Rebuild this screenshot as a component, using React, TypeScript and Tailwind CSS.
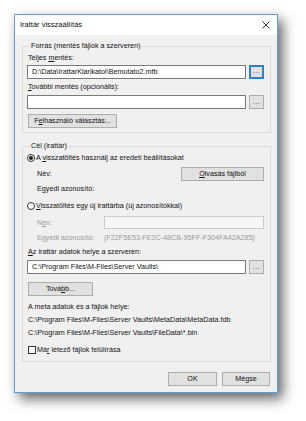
import React from "react";

const F = "font-['Liberation_Sans',Arial,sans-serif]";

function U({ children }: { children: React.ReactNode }) {
  return <span className="underline underline-offset-[1px]">{children}</span>;
}

function Btn({
  children,
  className = "",
}: {
  children: React.ReactNode;
  className?: string;
}) {
  return (
    <div
      className={`flex items-center justify-center h-[14px] bg-[#e1e1e1] border border-[#adadad] text-[7.2px] leading-none text-[#111] ${className}`}
    >
      {children}
    </div>
  );
}

function Dots({ focused = false }: { focused?: boolean }) {
  return (
    <div
      className={`flex items-end justify-center pb-[3px] w-[15px] h-[14px] bg-[#e1e1e1] ${
        focused ? "border-2 border-[#2a80d2]" : "border border-[#adadad]"
      } text-[7px] leading-none text-[#333]`}
    >
      <span className="tracking-[0.5px]">...</span>
    </div>
  );
}

function Input({ value = "" }: { value?: string }) {
  return (
    <div className="flex-1 h-[14px] bg-white border border-[#7a7a7a] flex items-center pl-[4px] text-[7.2px] leading-none text-[#111] whitespace-nowrap overflow-hidden">
      {value}
    </div>
  );
}

function Radio({ checked }: { checked?: boolean }) {
  return (
    <div className="w-[8px] h-[8px] rounded-full border border-[#333] bg-white flex items-center justify-center shrink-0">
      {checked && <div className="w-[4px] h-[4px] rounded-full bg-[#222]" />}
    </div>
  );
}

export default function App() {
  return (
    <div className={`w-[306px] h-[421px] bg-white pt-[14px] pl-[14px] ${F}`}>
      <div className="w-[264px] h-[379px] border border-[#5d9fdc] bg-[#f0f0f0] flex flex-col shadow-[5px_6px_12px_rgba(0,0,0,0.6)]">
        {/* Title bar */}
        <div className="h-[20px] bg-white flex items-center justify-between pl-[5px] pr-[6px] shrink-0">
          <span className="text-[7.5px] text-[#111] leading-none">
            Irattár visszaállítás
          </span>
          <svg width="8" height="8" viewBox="0 0 8 8" className="mr-[1px]">
            <path d="M0.5 0.5 L7.5 7.5 M7.5 0.5 L0.5 7.5" stroke="#333" strokeWidth="1" />
          </svg>
        </div>

        {/* Body */}
        <div className="flex-1 flex flex-col pl-[7px] pr-[6px] pt-[6px] text-[7.2px] text-[#111] leading-[10px]">
          {/* Group 1 */}
          <fieldset className="border border-[#dcdcdc] pl-[4px] pr-[6px] pb-[4px]">
            <legend className="ml-[3px] px-[1px] leading-[10px]">
              Forrás (mentés fájlok a szerveren)
            </legend>
            <div className="mt-[2px] pl-[1px]">
              Teljes <U>m</U>entés:
            </div>
            <div className="flex gap-[3px] mt-[2px]">
              <Input value="D:\Data\IrattarKlarikatol\Bemutato2.mfb" />
              <Dots focused />
            </div>
            <div className="mt-[3px] pl-[1px]">
              <U>T</U>ovábbi mentés (opcionális):
            </div>
            <div className="flex gap-[3px] mt-[3px]">
              <Input />
              <Dots />
            </div>
            <Btn className="w-[89px] mt-[5px] ml-[1px]">
              F<U>e</U>lhasználó választás...
            </Btn>
          </fieldset>

          {/* Group 2 */}
          <fieldset className="border border-[#dcdcdc] pl-[4px] pr-[6px] pb-[6px] mt-[8px]">
            <legend className="ml-[3px] px-[1px] leading-[10px]">Cél (irattár)</legend>
            <div className="flex items-center gap-[1px] mt-[2px] h-[10px]">
              <Radio checked />
              <span>
                A <U>v</U>isszatöltés használj az eredeti beállításokat
              </span>
            </div>
            <div className="flex items-center justify-between mt-[4px] h-[13px] pl-[10px]">
              <span>Név:</span>
              <Btn className="w-[83px] h-[13px]">
                <U>O</U>lvasás fájlból
              </Btn>
            </div>
            <div className="mt-[4px] pl-[10px] h-[10px]">Egyedi azonosító:</div>
            <div className="flex items-center gap-[1px] mt-[7px] h-[10px]">
              <Radio />
              <span>
                <U>V</U>isszatöltés egy új irattárba (új azonosítókkal)
              </span>
            </div>
            <div className="flex items-center mt-[5px] h-[13px] pl-[10px] text-[#9a9a9a]">
              <span className="w-[67px]">
                N<U>é</U>v:
              </span>
              <div className="flex-1 h-[13px] bg-[#f6f6f6] border border-[#cccccc]" />
            </div>
            <div className="flex items-center mt-[4px] h-[10px] pl-[10px] text-[#9a9a9a]">
              <span className="w-[67px]">Egyedi azonosító:</span>
              <span>{"{F22F5E53-FE2C-48CB-95FF-F304FA42A285}"}</span>
            </div>
            <div className="mt-[4px] h-[10px] pl-[1px]">
              <U>A</U>z irattár adatok helye a szerveren:
            </div>
            <div className="flex gap-[3px] mt-[3px]">
              <Input value="C:\Program Files\M-Files\Server Vaults\" />
              <Dots />
            </div>
            <Btn className="w-[65px] mt-[8px] ml-[1px]">
              Tová<U>b</U>b...
            </Btn>
            <div className="mt-[6px] h-[10px] pl-[1px]">A meta adatok és a fájlok helye:</div>
            <div className="mt-[3px] h-[10px] pl-[1px]">
              C:\Program Files\M-Files\Server Vaults\MetaData\MetaData.fdb
            </div>
            <div className="mt-[3px] h-[10px] pl-[1px]">
              C:\Program Files\M-Files\Server Vaults\FileData\*.bin
            </div>
            <div className="flex items-center gap-[1px] mt-[7px] h-[10px] pl-[1px]">
              <div className="w-[8px] h-[8px] border border-[#333] bg-white shrink-0" />
              <span>
                Má<U>r</U> létező fájlok felülírása
              </span>
            </div>
          </fieldset>

          {/* Bottom buttons */}
          <div className="flex justify-end gap-[5px] mt-[10px] pr-[1px]">
            <Btn className="w-[49px]">OK</Btn>
            <Btn className="w-[48px]">Mégse</Btn>
          </div>
        </div>
      </div>
    </div>
  );
}
